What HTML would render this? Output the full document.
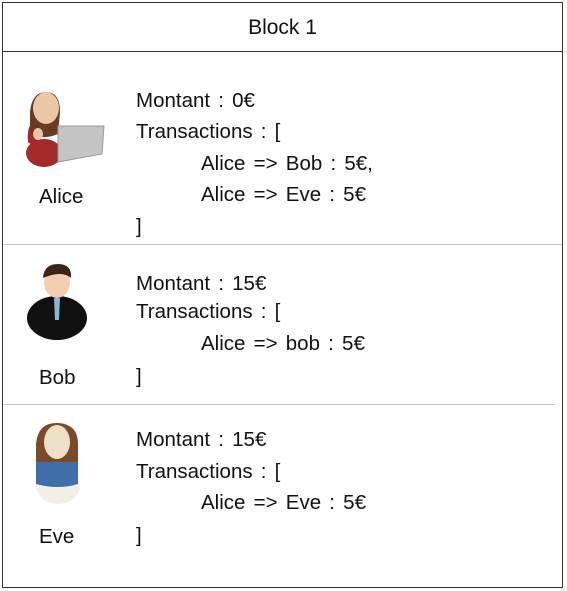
<html><head><style>
body{margin:0;width:567px;height:591px;background:#fff;position:relative;font-family:"Liberation Sans",sans-serif;color:#111;}
.box{position:absolute;left:2px;top:2px;width:559px;height:584px;border:1px solid #333;}
.hdr{position:absolute;left:0;top:0;width:559px;height:48px;border-bottom:1px solid #333;text-align:center;line-height:50px;font-size:21px;}
.t{position:absolute;font-size:20.5px;word-spacing:2.5px;white-space:nowrap;}
.sep{position:absolute;height:1px;background:#c8c8c8;}
svg{position:absolute;}
</style></head><body>
<div class="box"><div class="hdr">Block 1</div></div>
<div class="sep" style="left:3px;top:244px;width:559px"></div>
<div class="sep" style="left:3px;top:404px;width:552px"></div>

<!-- Alice -->
<svg style="left:22px;top:90px" width="90" height="85" viewBox="0 0 90 85">
<ellipse cx="22" cy="63" rx="18" ry="14" fill="#a3292b"/>
<path d="M6 52 Q4 30 18 30 L30 30 Q20 40 14 58 Z" fill="#a3292b"/>
<path d="M8 22 Q10 2 24 2 Q38 2 38 22 L36 44 Q22 50 8 44 Z" fill="#6b3a22"/>
<ellipse cx="24" cy="18" rx="13" ry="16" fill="#eac7a6"/>
<path d="M36 36 L82 36 L80 64 L36 72 Z" fill="#c4c4c4" stroke="#999"/>
<ellipse cx="16" cy="44" rx="5" ry="6" fill="#eac7a6"/>
</svg>
<div class="t" style="left:39px;top:185px">Alice</div>
<div class="t" style="left:136px;top:89px">Montant : 0€</div>
<div class="t" style="left:136px;top:120px">Transactions : [</div>
<div class="t" style="left:201px;top:152px">Alice =&gt; Bob : 5€,</div>
<div class="t" style="left:201px;top:183px">Alice =&gt; Eve : 5€</div>
<div class="t" style="left:136px;top:215px">]</div>

<!-- Bob -->
<svg style="left:26px;top:262px" width="64" height="80" viewBox="0 0 64 80">
<ellipse cx="31" cy="56" rx="30" ry="22" fill="#111"/>
<path d="M28 36 L34 36 L33 58 L29 58 Z" fill="#8fb4d6"/>
<ellipse cx="31" cy="20" rx="13" ry="16" fill="#f2cdb0"/>
<path d="M17 16 Q18 2 32 2 Q46 2 45 16 Q36 8 17 16Z" fill="#3a2418"/>
</svg>
<div class="t" style="left:39px;top:366px">Bob</div>
<div class="t" style="left:136px;top:272px">Montant : 15€</div>
<div class="t" style="left:136px;top:300px">Transactions : [</div>
<div class="t" style="left:201px;top:332px">Alice =&gt; bob : 5€</div>
<div class="t" style="left:136px;top:365px">]</div>

<!-- Eve -->
<svg style="left:28px;top:422px" width="64" height="90" viewBox="0 0 64 90">
<path d="M8 22 Q10 0 30 1 Q50 2 50 22 L50 54 L8 54 Z" fill="#7a4a2a"/>
<ellipse cx="30" cy="64" rx="22" ry="18" fill="#f2f0e6"/>
<path d="M8 40 L50 40 L50 62 Q30 68 8 62 Z" fill="#3f6ea8"/>
<ellipse cx="29" cy="20" rx="13" ry="17" fill="#ece0c8"/>
</svg>
<div class="t" style="left:39px;top:525px">Eve</div>
<div class="t" style="left:136px;top:428px">Montant : 15€</div>
<div class="t" style="left:136px;top:460px">Transactions : [</div>
<div class="t" style="left:201px;top:491px">Alice =&gt; Eve : 5€</div>
<div class="t" style="left:136px;top:524px">]</div>
</body></html>
